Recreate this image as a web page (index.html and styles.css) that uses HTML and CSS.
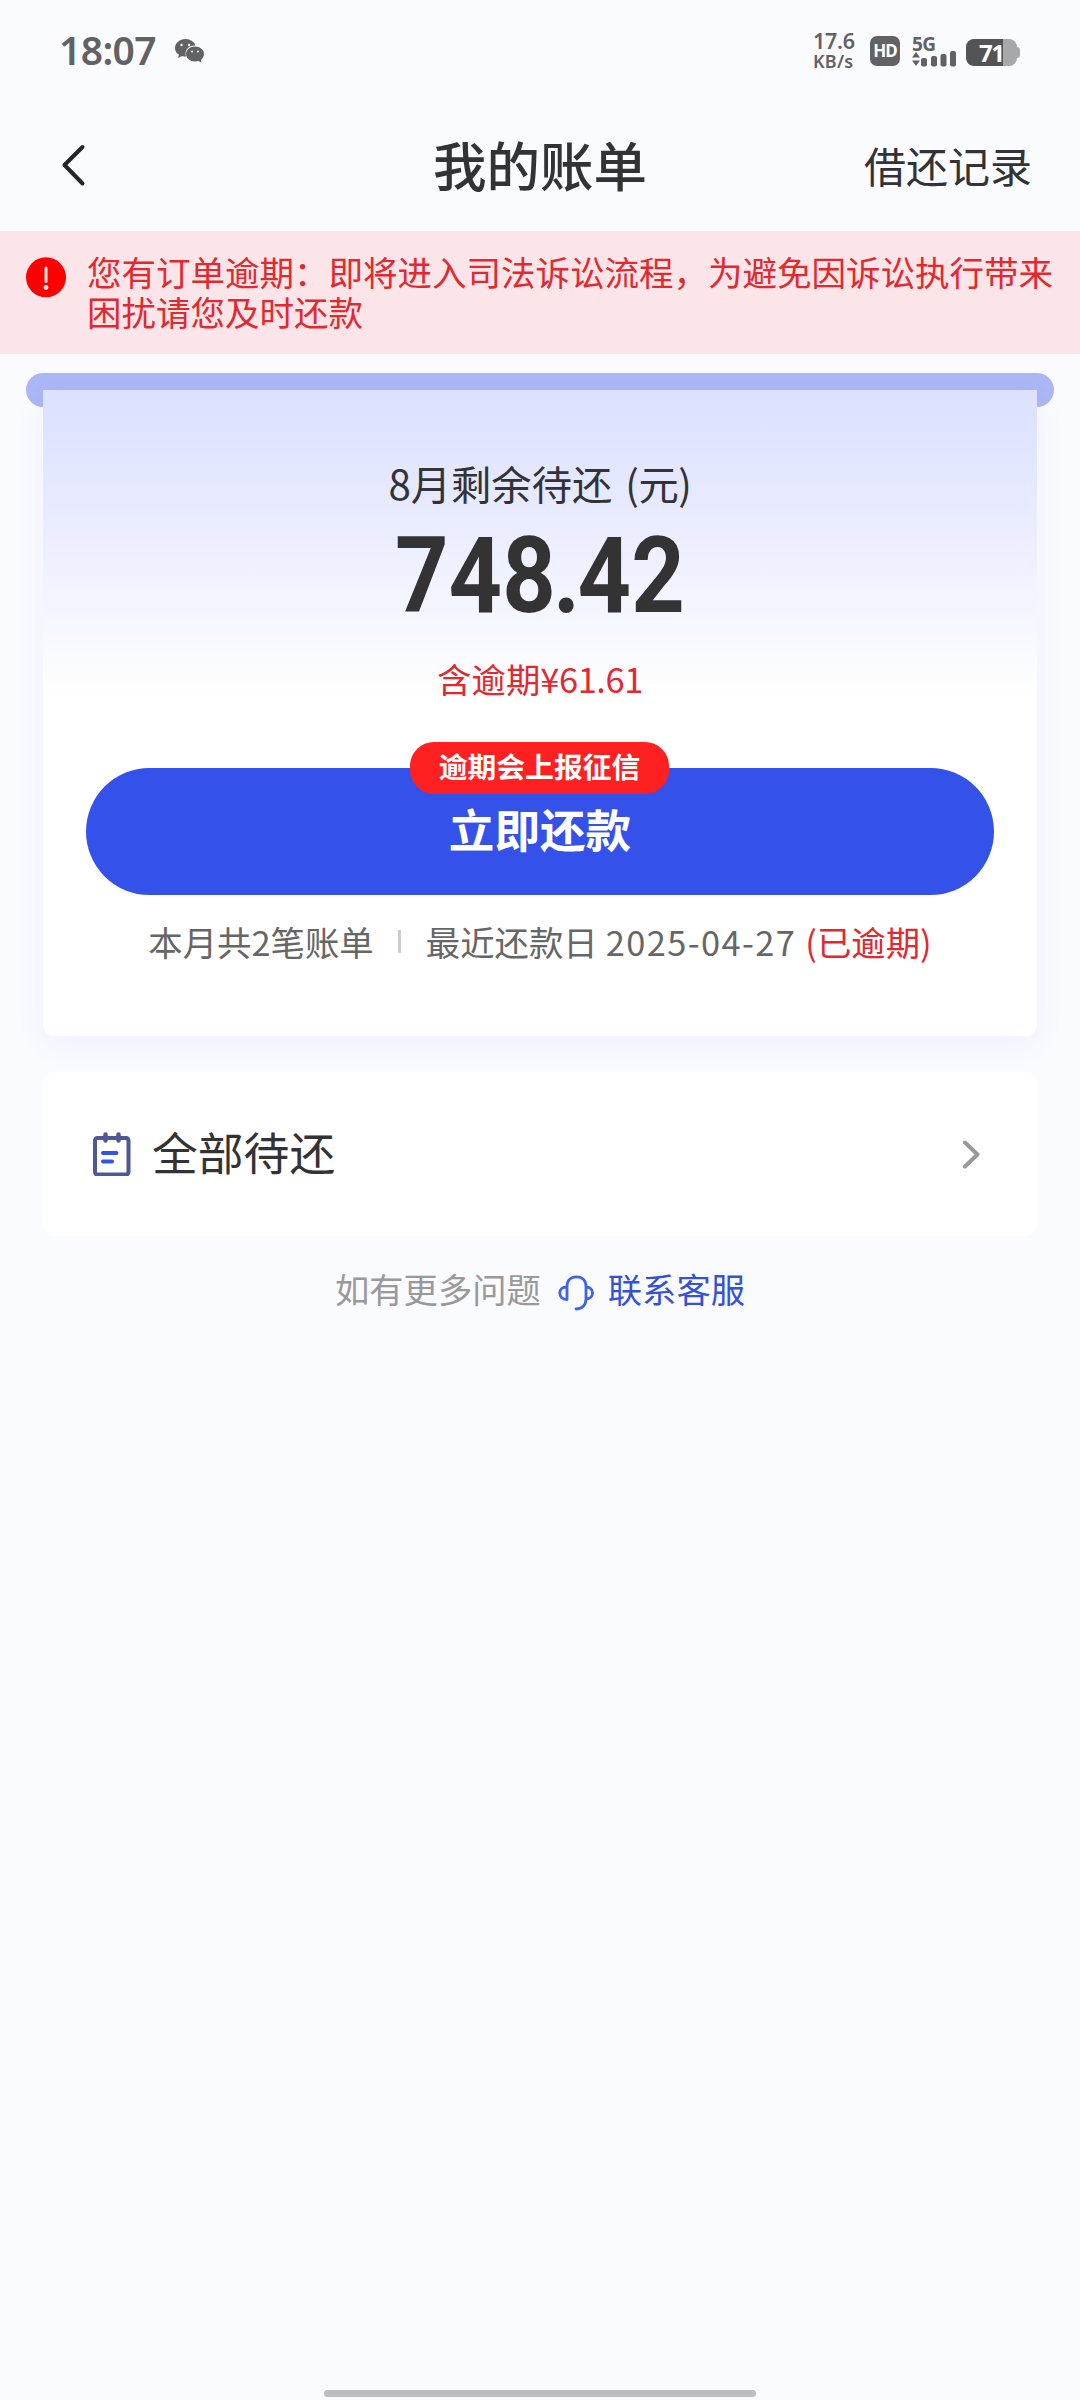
FILE: index.html
```html
<!DOCTYPE html>
<html lang="zh-CN">
<head>
<meta charset="utf-8">
<title>我的账单</title>
<link rel="stylesheet" href="styles.css">
</head>
<body>
<div class="status">
  <span class="time">18:07</span>
  <svg class="wechat" width="30" height="26" viewBox="0 0 30 26">
    <path fill="#626264" d="M10.500 1C4.700 1 0 5 0 10c0 3 1.500 5.200 4 6.800L3 20l4-2c1.300.4 2.500.5 4 .5-2-7 3.500-11.500 9.500-11C19.500 4 15.500 1 10.500 1z"/>
    <path fill="#626264" d="M20 8.500c-5 0-9 3.300-9 7.600s4 7.500 9 7.500c1.200 0 2.400-.2 3.500-.5l3 1.700-.7-2.900C27.700 20.500 29 18.500 29 16.100c0-4.300-4-7.600-9-7.600z"/>
    <g fill="#fafbff"><circle cx="6.500" cy="7" r="1.200"/><circle cx="14" cy="7" r="1.200"/><circle cx="17" cy="13.600" r="1"/><circle cx="23" cy="13.600" r="1"/></g>
  </svg>
  <div class="status-right">
    <div class="speed"><span class="speed-num">17.6</span><span class="speed-unit">KB/s</span></div>
    <span class="hd">HD</span>
    <div class="signal">
      <span class="net">5G</span>
      <svg width="44" height="16" viewBox="0 0 44 16" fill="#626264">
        <path d="M0 6.500 4 1l4 5.500zM0 9.500h8L4 15z"/>
        <rect x="9" y="7" width="6" height="8.500" rx="2"/><rect x="19" y="5" width="6" height="10.500" rx="2"/><rect x="28.500" y="3" width="6" height="12.500" rx="2"/><rect x="38" y="0" width="6" height="15.500" rx="2"/>
      </svg>
    </div>
    <div class="battery"><span class="cell">71</span><span class="nub"></span></div>
  </div>
</div>
<header class="nav">
  <svg width="26" height="44" viewBox="0 0 26 44" fill="none" stroke="#252527" stroke-width="4" stroke-linecap="round" stroke-linejoin="round"><path d="M22.500 4 4.500 22 22.500 40.500"/></svg>
  <h1 class="title">我的账单</h1>
  <a class="records">借还记录</a>
</header>
<div class="notice">
  <svg width="42" height="42" viewBox="0 0 42 42"><circle cx="20" cy="20.300" r="20" fill="#fe0000"/><path d="M20 11v13.500" stroke="#ffe6e6" stroke-width="3" stroke-linecap="round"/><circle cx="20" cy="30.500" r="2.400" fill="#ffe6e6"/></svg>
  <p class="notice-text">您有订单逾期：即将进入司法诉讼流程，为避免因诉讼执行带来困扰请您及时还款</p>
</div>
<main class="main">
  <div class="slot">
    <section class="bill">
      <div class="bill-label"><span>8月剩余待还</span><span class="unit">(元)</span></div>
      <div class="amount">748<span class="dot">.</span>42</div>
      <div class="overdue">含逾期<span class="money">¥61.61</span></div>
      <a class="pay"><span class="pay-text">立即还款</span><span class="badge">逾期会上报征信</span></a>
      <div class="info">
        <span>本月共2笔账单</span><i class="sep"></i><span>最近还款日</span><span class="date">2025-04-27</span><span class="late">(已逾期)</span>
      </div>
    </section>
  </div>
  <section class="all">
    <svg width="38" height="44" viewBox="0 0 38 44" fill="none" stroke-linecap="round">
      <rect x="2" y="6" width="33.500" height="36.500" rx="2.500" stroke="#4d5896" stroke-width="4"/>
      <path d="M12.500 2.500v6M25.500 2.500v6" stroke="#4d5896" stroke-width="4.500"/>
      <path d="M10 21h13.500M10 29.500h9" stroke="#3452e6" stroke-width="4"/>
    </svg>
    <span class="all-text">全部待还</span>
    <svg width="18" height="30" viewBox="0 0 18 30" fill="none" stroke="#999" stroke-width="4" stroke-linecap="round" stroke-linejoin="round"><path d="M3 3.500 15.500 15.500 3 27.500"/></svg>
  </section>
</main>
<footer class="help">
  <span>如有更多问题</span>
  <svg width="36" height="36" viewBox="0 0 36 36" fill="none" stroke="#3f63e8" stroke-width="2.800" stroke-linecap="round" stroke-linejoin="round"><path d="M9 24.500V11.500C9 5.500 12.500 1.800 18.500 1.800S28 5.500 28 11.500v12.500C28 30 24 34 18 34M8.500 12C4.500 12 1.800 14 1.800 18s2.700 6.500 7 6.500M28 12c4 0 6.500 2.500 6.500 6s-2.500 6-6.500 6"/></svg>
  <a class="contact">联系客服</a>
</footer>
<div class="home"></div>
</body>
</html>
```
FILE: styles.css
```css
* { box-sizing: border-box; }
body {
  margin: 0;
  width: 1080px;
  height: 2400px;
  display: flex;
  flex-direction: column;
  background: #fafbff;
  color: #333335;
  font-family: "Noto Sans CJK SC", sans-serif;
  overflow: hidden;
  white-space: nowrap;
}
h1, p { margin: 0; }
svg { display: block; flex: none; }

.status {
  height: 104px;
  padding: 0 60px 0 59px;
  display: flex;
  align-items: center;
  color: #626264;
  font-family: "Noto Sans", sans-serif;
}
.time { width: 99px; font-size: 39px; line-height: 48px; font-weight: 600; letter-spacing: -0.6px; margin-top: -4px; }
.wechat { margin: -3px 0 0 17px; }
.status-right { margin-left: auto; display: flex; align-items: center; }
.speed { display: flex; flex-direction: column; width: 44px; margin: -2px 13px 0 0; font-weight: 600; }
.speed-num { font-size: 21.500px; line-height: 20px; letter-spacing: -0.3px; }
.speed-unit { font-size: 18px; line-height: 20px; font-weight: 600; letter-spacing: 0.2px; }
.hd {
  width: 30px; height: 30px; margin-right: 12px; margin-top: -2px;
  border-radius: 7px; background: #626264; color: #fff;
  font: 700 17px/30px "Noto Sans", sans-serif; text-align: center; letter-spacing: -1px;
}
.signal { width: 44px; margin-right: 10px; display: flex; flex-direction: column; }
.net { font-size: 19px; line-height: 15px; font-weight: 700; letter-spacing: -0.5px; }
.signal svg { margin-top: -1px; }
.battery { display: flex; align-items: center; margin-top: 1px; }
.cell {
  width: 51px; height: 27px; border-radius: 8px;
  background: linear-gradient(90deg, #545456 37px, #a8a8aa 37px);
  color: #fff; font: 700 24px/27px "Noto Sans", sans-serif;
  padding-left: 13px; letter-spacing: -1.5px;
}
.nub { width: 3px; height: 11px; border-radius: 0 4px 4px 0; background: #a8a8aa; }

.nav {
  height: 127px;
  padding: 0 48px 0 60px;
  display: grid;
  grid-template-columns: 1fr auto 1fr;
  align-items: center;
}
.nav svg { margin-top: -5px; }
.title { font-size: 53.5px; line-height: 76px; font-weight: 500; margin: -7px 0 0 -12px; }
.records { justify-self: end; font-size: 42px; line-height: 60px; margin-top: -6px; }

.notice {
  height: 123px;
  padding: 20px 0 0 26px;
  display: flex;
  background: #fbe5e8;
  color: #e2292f;
}
.notice svg { margin-top: 6px; }
.notice-text { width: 980px; margin-left: 19px; font-size: 34.5px; line-height: 40px; white-space: normal; }

.main { padding: 19px 26px 0; }
.slot {
  height: 34px;
  padding: 17px 17px 0;
  border-radius: 17px;
  background: #abb6f5;
}
.bill {
  height: 646px;
  border-radius: 0 0 12px 12px;
  background: linear-gradient(#dbe1ff 0, #e1e5ff 60px, #fff 310px);
  box-shadow: 0 10px 30px rgba(90, 90, 220, 0.06);
  padding: 64px 43px 0;
  display: flex;
  flex-direction: column;
  align-items: center;
}
.bill-label { display: flex; gap: 13px; font-size: 40.3px; line-height: 58px; }
.unit { letter-spacing: -0.4px; }
.amount {
  margin-top: 3px;
  font: 700 105px/124px Roboto, sans-serif;
  color: #333;
  transform: scaleX(0.89);
  height: 124px;
}
.dot { margin: 0 -3px; }
.overdue { margin-top: 14px; font-size: 34.4px; line-height: 50px; color: #e2292f; }
.money { letter-spacing: -0.4px; }
.pay {
  position: relative;
  width: 908px;
  height: 127px;
  margin-top: 65px;
  border-radius: 64px;
  background: #3452e9;
  color: #fff;
  font-size: 45.6px;
  line-height: 120px;
  font-weight: 700;
  text-align: center;
}
.badge {
  position: absolute;
  left: 324px;
  top: -26px;
  width: 259px;
  height: 52px;
  border-radius: 24px;
  background: #ff2022;
  font-size: 28.8px;
  line-height: 48px;
}
.info { display: flex; align-items: center; margin-top: 21px; font-size: 34.4px; line-height: 50px; color: #666; }
.sep { width: 3px; height: 23px; margin: 1px 25px 0 24px; background: #ccc; }
.date { margin: 0 9px 0 8px; letter-spacing: 1.4px; }
.late { color: #e2292f; }

.all {
  height: 164px;
  margin: 665px 17px 0;
  padding: 0 57px 0 50px;
  border-radius: 12px;
  background: #fff;
  display: flex;
  align-items: center;
}
.all-text { flex: 1; margin-left: 21px; font-size: 45.8px; line-height: 66px; margin-top: -6px; }

.help { display: flex; align-items: center; justify-content: center; margin-top: 27px; font-size: 34.3px; line-height: 50px; color: #999; }
.help svg { margin: 9px 14px 0 17px; }
.contact { color: #3451d8; }

.home { width: 432px; height: 7px; margin: auto auto 3px; border-radius: 4px; background: #bdbdbf; }
```
